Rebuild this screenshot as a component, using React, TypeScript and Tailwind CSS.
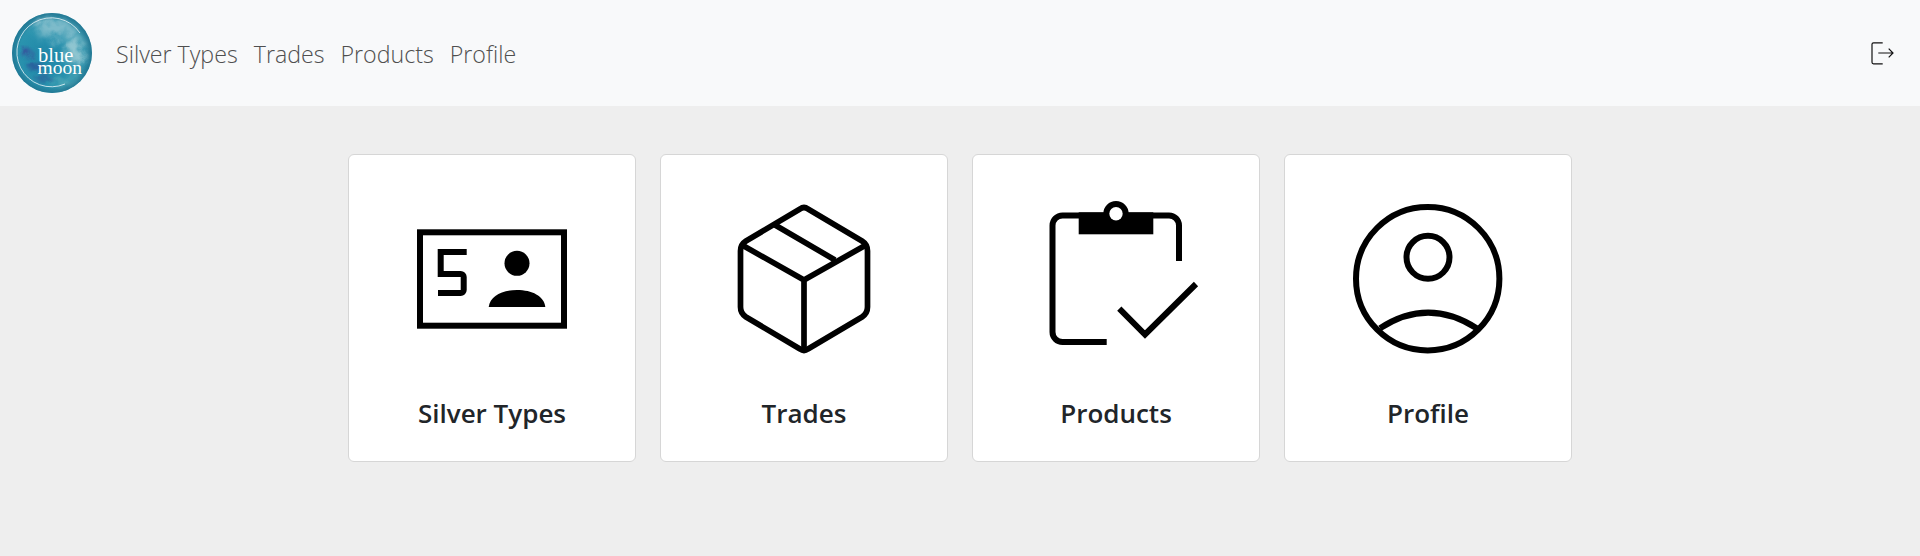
import React from "react";

function Logo() {
  return (
    <svg width="80" height="80" viewBox="0 0 80 80" className="shrink-0">
      <defs>
        <clipPath id="disc"><circle cx="40" cy="40" r="40" /></clipPath>
        <radialGradient id="base" cx="42%" cy="58%" r="58%">
          <stop offset="0%" stopColor="#1f86a8" />
          <stop offset="65%" stopColor="#2a93ae" />
          <stop offset="100%" stopColor="#2f90a8" />
        </radialGradient>
        <radialGradient id="edge" cx="50%" cy="50%" r="50%">
          <stop offset="82%" stopColor="#1d6f8c" stopOpacity="0" />
          <stop offset="100%" stopColor="#1d6f8c" stopOpacity="0.75" />
        </radialGradient>
        <filter id="soft" x="-50%" y="-50%" width="200%" height="200%">
          <feGaussianBlur stdDeviation="4" result="blur" />
          <feTurbulence type="fractalNoise" baseFrequency="0.07" numOctaves="3" seed="4" result="noise" />
          <feDisplacementMap in="blur" in2="noise" scale="22" />
        </filter>
        <filter id="soft2" x="-50%" y="-50%" width="200%" height="200%">
          <feGaussianBlur stdDeviation="2" result="blur" />
          <feTurbulence type="fractalNoise" baseFrequency="0.1" numOctaves="2" seed="9" result="noise" />
          <feDisplacementMap in="blur" in2="noise" scale="10" />
        </filter>
      </defs>
      <g clipPath="url(#disc)">
        <rect width="80" height="80" fill="url(#base)" />
        <ellipse cx="44" cy="16" rx="20" ry="10" fill="#7fbccb" filter="url(#soft)" />
        <ellipse cx="64" cy="38" rx="8" ry="16" fill="#97c9d3" filter="url(#soft)" />
        <ellipse cx="58" cy="70" rx="16" ry="8" fill="#4ca6b6" filter="url(#soft)" />
        <ellipse cx="15" cy="40" rx="5" ry="4" fill="#35559c" filter="url(#soft2)" />
        <ellipse cx="23" cy="53" rx="8" ry="4" fill="#2a5f9c" filter="url(#soft2)" />
        <ellipse cx="32" cy="66" rx="8" ry="4" fill="#2a6f9f" filter="url(#soft2)" />
        <rect width="80" height="80" fill="url(#edge)" />
        <path d="M68 20A34.5 34.5 0 1 0 53 71" fill="none" stroke="#eef8fa" strokeWidth="0.8" />
        <text x="26" y="49" fill="#fff" fontFamily="'Liberation Serif', serif" fontSize="20.5">blue</text>
        <text x="25.5" y="61" fill="#fff" fontFamily="'Liberation Serif', serif" fontSize="19.5">moon</text>
      </g>
    </svg>
  );
}

function CardIcon() {
  return (
    <svg width="160" height="160" viewBox="0 0 160 160" className="overflow-visible">
      <rect x="8" y="33.3" width="144" height="93.4" fill="none" stroke="#000" strokeWidth="6" />
      <path d="M54.7 53H28.7V75H48.7a3 3 0 0 1 3 3V91a3 3 0 0 1-3 3H26" fill="none" stroke="#000" strokeWidth="6" />
      <circle cx="105" cy="64.3" r="12.5" fill="#000" />
      <path d="M76.7 108C78 97 90 91 105 91S132 97 133.3 108Z" fill="#000" />
    </svg>
  );
}

function BoxIcon() {
  return (
    <svg width="160" height="160" viewBox="0 0 160 160" className="overflow-visible" fill="none" stroke="#000" strokeWidth="5.7" strokeLinejoin="round">
      <path d="M76 10Q80 7 84 10L138 42Q143.5 45.5 143.5 52V108Q143.5 114.5 138 118L84 150Q80 153 76 150L22 118Q16.5 114.5 16.5 108V52Q16.5 45.5 22 42Z" />
      <path d="M18 46L80 81L142 46M80 81V151M51 26L111 61" />
    </svg>
  );
}

function ClipIcon() {
  return (
    <svg width="160" height="160" viewBox="0 0 160 160" className="overflow-visible">
      <path d="M143 62V26.5a10 10 0 0 0-10-10H26.5a10 10 0 0 0-10 10V133a10 10 0 0 0 10 10H70.7" fill="none" stroke="#000" strokeWidth="6" />
      <rect x="42.7" y="13.3" width="74.6" height="22" fill="#000" />
      <circle cx="80" cy="14.7" r="12.7" fill="#000" />
      <circle cx="80" cy="14.7" r="6.7" fill="#fff" />
      <path d="M83.3 109.7L109 135.5L160 85" fill="none" stroke="#000" strokeWidth="6" />
    </svg>
  );
}

function ProfileIcon() {
  return (
    <svg width="160" height="160" viewBox="0 0 160 160" className="overflow-visible" fill="none" stroke="#000" strokeWidth="6">
      <circle cx="79.7" cy="79.7" r="71.7" />
      <circle cx="80" cy="58.3" r="21.5" />
      <path d="M32 129.3Q80 98 128.7 129.3" />
    </svg>
  );
}

const cards = [
  { title: "Silver Types", icon: <CardIcon /> },
  { title: "Trades", icon: <BoxIcon /> },
  { title: "Products", icon: <ClipIcon /> },
  { title: "Profile", icon: <ProfileIcon /> },
];

export default function App() {
  return (
    <div className="min-h-screen bg-[#eeeeee] font-['Open_Sans',sans-serif]">
      <header className="flex h-[106px] items-center justify-between bg-[#f8f9fa] pl-[12px] pr-[22px]">
        <div className="flex items-center">
          <Logo />
          <nav className="ml-[24px] flex gap-4 pt-[2px] text-[23.2px] font-light text-[#4f4f4f]">
            {cards.map((c) => (
              <a key={c.title} href="#" className="leading-[30px]">{c.title}</a>
            ))}
          </nav>
        </div>
        <svg width="32" height="32" viewBox="0 0 32 32" fill="none" stroke="#111" strokeWidth="1.2">
          <path d="M16.7 5.8H7.5A1.5 1.5 0 0 0 6 7.3V25.3A1.5 1.5 0 0 0 7.5 26.8H16.7" />
          <path d="M12.3 16H27M22.7 11.7L27 16L22.7 20.3" />
        </svg>
      </header>
      <main className="flex justify-center gap-6 pt-[48px]">
        {cards.map((c) => (
          <div key={c.title} className="flex h-[308px] w-[288px] flex-col items-center rounded-md border border-[#d6d6d6] bg-white pt-[44px]">
            {c.icon}
            <h2 className="mt-[39px] text-[26px] leading-[30px] font-semibold text-[#212529]">{c.title}</h2>
          </div>
        ))}
      </main>
    </div>
  );
}
